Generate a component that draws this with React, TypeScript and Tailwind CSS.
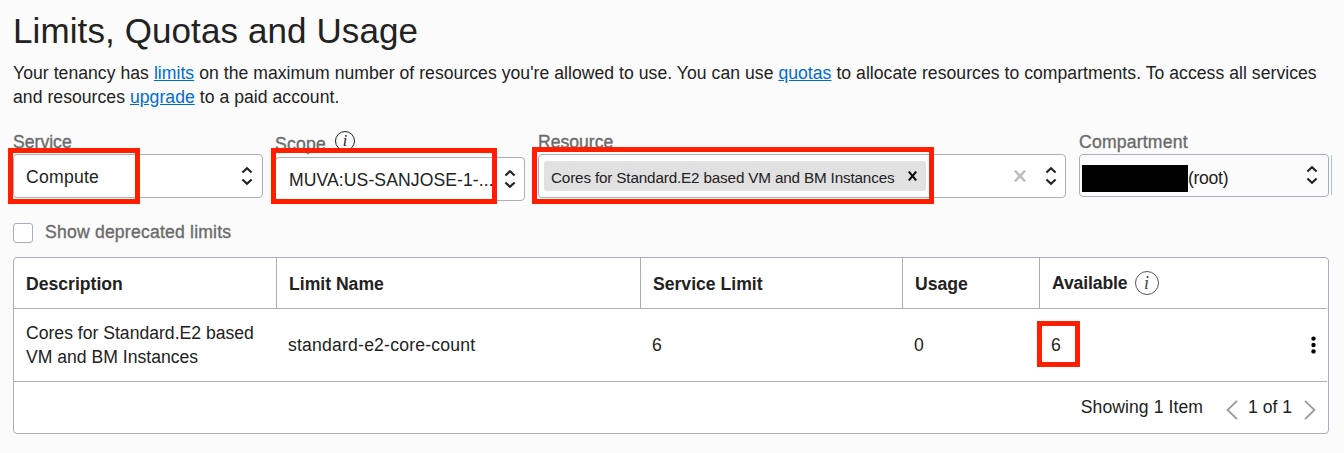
import React from "react";

const medium = "[-webkit-text-stroke:0.35px_currentColor]";

function Sorter({ className = "" }: { className?: string }) {
  return (
    <svg
      className={`h-5 w-3 shrink-0 ${className}`}
      viewBox="0 0 12 20"
      fill="none"
      stroke="#222"
      strokeWidth="2.1"
    >
      <path d="M1.4 6.6 6 2.2l4.6 4.4M1.4 13.4 6 17.8l4.6-4.4" />
    </svg>
  );
}

function Info({ className = "" }: { className?: string }) {
  return (
    <span
      className={`flex shrink-0 items-center justify-center rounded-full border font-['Liberation_Serif',serif] italic tracking-normal ${className}`}
    >
      i
    </span>
  );
}

function Highlight({ className }: { className: string }) {
  return <div className={`pointer-events-none absolute border-[5px] border-[#ff1f00] ${className}`} />;
}

function HeadCell({ children }: { children: React.ReactNode }) {
  return <div className="flex items-center border-r border-[#a8afba] pl-3 pt-px">{children}</div>;
}

export default function App() {
  return (
    <div className="relative h-[453px] w-[1344px] overflow-hidden bg-[#fbfbfb] pl-[13px] font-['Liberation_Sans',Arial,sans-serif] text-[17.6px] leading-6 tracking-normal text-[#222]">
      <h1 className="h-[61px] pt-[11px] text-[35px] leading-10 tracking-[0.1px]">Limits, Quotas and Usage</h1>
      <p className="whitespace-nowrap tracking-[0.04px]">
        Your tenancy has <a className="text-[#006bd6] underline">limits</a> on the maximum number of resources
        you're allowed to use. You can use <a className="text-[#006bd6] underline">quotas</a> to allocate
        resources to compartments. To access all services
        <br />
        and resources <a className="text-[#006bd6] underline">upgrade</a> to a paid account.
      </p>

      <div className="flex h-[109px] items-start pt-[21px]">
        <div className="w-[262px]">
          <div className={`h-6 text-[#6b6b6b] ${medium}`}>Service</div>
          <div className="flex h-11 w-[250px] items-center justify-between rounded border border-[#a8afba] bg-white pl-3 pr-[9px]">
            <span className="pt-0.5 tracking-[0.25px]">Compute</span>
            <Sorter />
          </div>
        </div>
        <div className="w-[263px]">
          <div className="flex h-[27px] pt-0.5">
            <span className={`text-[#6b6b6b] tracking-[0.2px] ${medium}`}>Scope</span>
            <Info className="-mt-[1px] ml-[9px] h-5 w-5 border-[#222] text-[16px]" />
          </div>
          <div className="flex h-11 w-[250px] items-center justify-between rounded border border-[#a8afba] bg-white pl-[13px] pr-2">
            <span className="whitespace-nowrap pt-0.5 tracking-[0.08px]">MUVA:US-SANJOSE-1-...</span>
            <Sorter />
          </div>
        </div>
        <div className="w-[541px]">
          <div className={`h-6 text-[#6b6b6b] ${medium}`}>Resource</div>
          <div className="flex h-11 w-[528px] items-center rounded border border-[#a8afba] bg-white pl-[5px] pr-2">
            <div className="flex h-[30px] w-[382px] items-center justify-between rounded-[3px] bg-[#e1e1e1] pl-[7px] pr-[9px]">
              <span className="whitespace-nowrap pt-1 text-[15.25px] tracking-[-0.16px]">
                Cores for Standard.E2 based VM and BM Instances
              </span>
              <svg className="h-[10px] w-[9px]" viewBox="0 0 9 10" stroke="#111" strokeWidth="2.1">
                <path d="M.8.6 8.2 9.4M8.2.6.8 9.4" />
              </svg>
            </div>
            <svg className="ml-auto mr-[19px] h-3 w-3" viewBox="0 0 12 12" stroke="#bdbdbd" strokeWidth="2.5">
              <path d="m.9.6 10.2 10.8M11.1.6.9 11.4" />
            </svg>
            <Sorter />
          </div>
        </div>
        <div className="flex">
          <div>
            <div className={`h-6 text-[#6b6b6b] tracking-[0.2px] ${medium}`}>Compartment</div>
            <div className="flex h-[43px] w-[250px] items-center rounded border border-[#a8afba] pl-0.5 pr-[10px]">
              <div className="mt-[5px] h-[27px] w-[106px] bg-black" />
              <span className="pt-1 tracking-[-0.3px]">(root)</span>
              <Sorter className="-mt-[1px] ml-auto" />
            </div>
          </div>
          <div className="ml-0.5 mt-[25px] h-10 w-px bg-[#a9c3df]" />
        </div>
      </div>

      <div className="flex h-[39px] pt-[5px]">
        <div className="h-5 w-5 rounded-[3px] border border-[#a8afba] bg-white" />
        <span className={`-mt-[3px] ml-3 text-[#6b6b6b] tracking-[0.2px] ${medium}`}>Show deprecated limits</span>
      </div>

      <div className="h-[177px] w-[1316px] rounded border border-[#a8afba] bg-white">
        <div className="mr-px grid h-[51px] grid-cols-[263px_364px_262px_137px_1fr] border-b border-[#a8afba] font-bold">
          <HeadCell>Description</HeadCell>
          <HeadCell>Limit Name</HeadCell>
          <HeadCell>Service Limit</HeadCell>
          <HeadCell>Usage</HeadCell>
          <div className="flex items-center pl-3">
            <span className="tracking-[-0.12px]">Available</span>
            <Info className="ml-[7px] h-6 w-6 border-[#555] text-[18px] font-normal text-[#444]" />
          </div>
        </div>
        <div className="mr-px grid h-[73px] grid-cols-[262px_364px_262px_137px_1fr] items-center border-b border-[#a8afba]">
          <div className="whitespace-nowrap pl-3">
            Cores for Standard.E2 based
            <br />
            VM and BM Instances
          </div>
          <div className="pl-3 tracking-[0.2px]">standard-e2-core-count</div>
          <div className="pl-3">6</div>
          <div className="pl-3">0</div>
          <div className="flex items-center justify-between pl-3 pr-[11px]">
            6
            <svg className="h-[18px] w-[5px]" viewBox="0 0 5 18">
              <circle cx="2.5" cy="2.6" r="2.2" />
              <circle cx="2.5" cy="9" r="2.2" />
              <circle cx="2.5" cy="15.4" r="2.2" />
            </svg>
          </div>
        </div>
        <div className="flex h-[51px] items-center justify-end pr-3">
          <span className="-mt-0.5 tracking-[0.07px]">Showing 1 Item</span>
          <svg className="ml-[23px] mt-1 h-5 w-3" viewBox="0 0 12 20" fill="none" stroke="#999" strokeWidth="1.8">
            <path d="M11 .8 1.5 10 11 19.2" />
          </svg>
          <span className="-mt-0.5 ml-[10px]">1 of 1</span>
          <svg className="ml-3 mt-1 h-5 w-3" viewBox="0 0 12 20" fill="none" stroke="#999" strokeWidth="1.8">
            <path d="M1 .8 10.5 10 1 19.2" />
          </svg>
        </div>
      </div>

      <Highlight className="left-2 top-[148px] h-14 w-[132px]" />
      <Highlight className="left-[271px] top-[148px] h-14 w-[226px]" />
      <Highlight className="left-[532px] top-[147px] h-[57px] w-[402px]" />
      <Highlight className="left-[1037px] top-[321px] h-[46px] w-[43px]" />
    </div>
  );
}
